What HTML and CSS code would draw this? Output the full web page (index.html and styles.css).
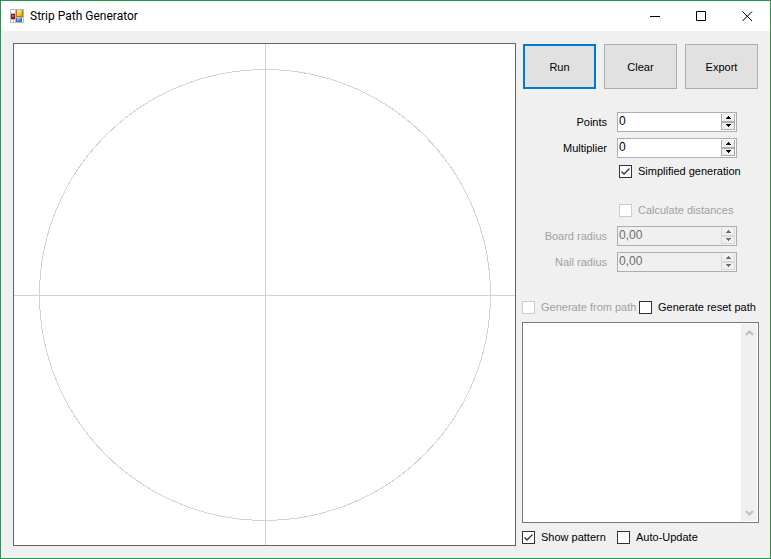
FILE: index.html
```html
<!DOCTYPE html>
<html lang="en">
<head>
<meta charset="utf-8">
<title>Strip Path Generator</title>
<link rel="stylesheet" href="styles.css">
</head>
<body>
<div class="window">
  <header class="titlebar">
    <svg class="app-icon" width="14" height="14" viewBox="0 0 14 14" shape-rendering="crispEdges" aria-hidden="true">
      <defs>
        <linearGradient id="gold" x1="0" y1="0" x2="1" y2="1"><stop offset="0" stop-color="#fff0a0"/><stop offset="1" stop-color="#f0a800"/></linearGradient>
        <linearGradient id="blue" x1="0" y1="0" x2="1" y2="1"><stop offset="0" stop-color="#a8ceff"/><stop offset="1" stop-color="#2f6fe0"/></linearGradient>
      </defs>
      <path fill="#bcbcbc" d="M0 0h14v14H0z"/>
      <path fill="#fff" d="M1 1h4v3H1zM1 11h2v2H1zM4 11h1v2H4zM12 9h1v4h-1z"/>
      <path fill="#b07a10" d="M6 1h7v7H6z"/><path fill="url(#gold)" d="M7 1h5v6H7z"/>
      <path fill="#8c1414" d="M1 5h4v5H1z"/><path fill="#e0604c" d="M2 6h2v2H2z"/>
      <path fill="#3c6cc0" d="M6 9h6v4H6z"/><path fill="url(#blue)" d="M7 9h4v3H7z"/>
    </svg>
    <h1 class="title">Strip Path Generator</h1>
    <div class="caption-buttons">
      <button class="caption" type="button" aria-label="Minimize"><svg width="11" height="11" viewBox="0 0 11 11"><path d="M0 5.500h10"/></svg></button>
      <button class="caption" type="button" aria-label="Maximize"><svg width="11" height="11" viewBox="0 0 11 11"><path d="M.5 .5h9v9h-9z"/></svg></button>
      <button class="caption" type="button" aria-label="Close"><svg width="11" height="11" viewBox="0 0 11 11"><path d="M.5 .5l9.500 9.500M10 .5L.5 10"/></svg></button>
    </div>
  </header>
  <main class="content">
    <div class="board">
      <svg class="pattern" viewBox="0 0 501 501" role="img" aria-label="Pattern">
        <path d="M251.500 0v501M0 251.500h501" shape-rendering="crispEdges"/>
        <circle cx="251" cy="251" r="225.500" shape-rendering="crispEdges"/>
      </svg>
    </div>
    <form class="panel">
      <div class="actions">
        <button class="action primary" type="button">Run</button>
        <button class="action" type="button">Clear</button>
        <button class="action" type="button">Export</button>
      </div>
      <div class="group">
        <div class="field">
          <label for="points">Points</label>
          <div class="spinner">
            <input id="points" type="text" value="0">
            <div class="steps">
              <button type="button" aria-label="Increase points"><svg width="7" height="4" viewBox="0 0 7 4"><path d="M3 0h1v1h1v1h1v1H1V2h1V1h1z"/></svg></button>
              <button type="button" aria-label="Decrease points"><svg width="7" height="4" viewBox="0 0 7 4"><path d="M1 0h5v1H5v1H4v1H3V2H2V1H1z"/></svg></button>
            </div>
          </div>
        </div>
        <div class="field">
          <label for="multiplier">Multiplier</label>
          <div class="spinner">
            <input id="multiplier" type="text" value="0">
            <div class="steps">
              <button type="button" aria-label="Increase multiplier"><svg width="7" height="4" viewBox="0 0 7 4"><path d="M3 0h1v1h1v1h1v1H1V2h1V1h1z"/></svg></button>
              <button type="button" aria-label="Decrease multiplier"><svg width="7" height="4" viewBox="0 0 7 4"><path d="M1 0h5v1H5v1H4v1H3V2H2V1H1z"/></svg></button>
            </div>
          </div>
        </div>
        <label class="check indented"><input type="checkbox" checked>Simplified generation</label>
      </div>
      <div class="group distances">
        <label class="check indented off"><input type="checkbox" disabled>Calculate distances</label>
        <div class="field off">
          <label for="board-radius">Board radius</label>
          <div class="spinner">
            <input id="board-radius" type="text" value="0,00" disabled>
            <div class="steps">
              <button type="button" aria-label="Increase board radius" disabled><svg width="7" height="4" viewBox="0 0 7 4"><path d="M3 0h1v1h1v1h1v1H1V2h1V1h1z"/></svg></button>
              <button type="button" aria-label="Decrease board radius" disabled><svg width="7" height="4" viewBox="0 0 7 4"><path d="M1 0h5v1H5v1H4v1H3V2H2V1H1z"/></svg></button>
            </div>
          </div>
        </div>
        <div class="field off">
          <label for="nail-radius">Nail radius</label>
          <div class="spinner">
            <input id="nail-radius" type="text" value="0,00" disabled>
            <div class="steps">
              <button type="button" aria-label="Increase nail radius" disabled><svg width="7" height="4" viewBox="0 0 7 4"><path d="M3 0h1v1h1v1h1v1H1V2h1V1h1z"/></svg></button>
              <button type="button" aria-label="Decrease nail radius" disabled><svg width="7" height="4" viewBox="0 0 7 4"><path d="M1 0h5v1H5v1H4v1H3V2H2V1H1z"/></svg></button>
            </div>
          </div>
        </div>
      </div>
      <div class="checks path-options">
        <label class="check off"><input type="checkbox" disabled>Generate from path</label>
        <label class="check"><input type="checkbox">Generate reset path</label>
      </div>
      <div class="output">
        <textarea aria-label="Path"></textarea>
        <div class="scrollbar">
          <button type="button" aria-label="Scroll up" disabled><svg width="9" height="6" viewBox="0 0 9 6"><path d="M1 5l3.500-3.500L8 5"/></svg></button>
          <button type="button" aria-label="Scroll down" disabled><svg width="9" height="6" viewBox="0 0 9 6"><path d="M1 1l3.500 3.500L8 1"/></svg></button>
        </div>
      </div>
      <div class="checks view-options">
        <label class="check"><input type="checkbox" checked>Show pattern</label>
        <label class="check"><input type="checkbox">Auto-Update</label>
      </div>
    </form>
  </main>
</div>
</body>
</html>
```
FILE: styles.css
```css
* { box-sizing: border-box; }

body {
  margin: 0;
  color: #000;
  font: 11px/14px "Liberation Sans", Arial, sans-serif;
}

button, input, textarea {
  margin: 0;
  padding: 0;
  border: 0;
  border-radius: 0;
  color: inherit;
  font: inherit;
}

svg { display: block; }

.window {
  display: flex;
  flex-direction: column;
  min-height: 100vh;
  border: 1px solid #219653;
  background: #f0f0f0;
}

.titlebar {
  display: flex;
  align-items: center;
  height: 30px;
  padding-left: 9px;
  background: #fff;
}

.title {
  flex: 1;
  margin: 0 0 0 6px;
  font: 12px/16px Roboto, sans-serif;
}

.caption-buttons { display: flex; }

.caption {
  display: grid;
  place-items: center;
  width: 46px;
  height: 30px;
  background: none;
}

.caption path { fill: none; stroke: #000; }

.content {
  display: flex;
  flex: 1;
  gap: 6px;
  padding: 12px 11px 12px 12px;
}

.board {
  flex: 1;
  min-width: 0;
  border: 1px solid #646464;
  background: #fff;
}

.pattern { width: 100%; height: 100%; }

.pattern path, .pattern circle { fill: none; stroke: #d3d3d3; }

.panel {
  display: flex;
  flex-direction: column;
  width: 237px;
}

.actions {
  display: grid;
  grid-template-columns: repeat(3, 1fr);
  gap: 8px;
  padding: 1px 1px 0;
}

.action {
  height: 45px;
  border: 1px solid #adadad;
  background: #e1e1e1;
}

.primary { border: 2px solid #0078d7; }

.group {
  display: flex;
  flex-direction: column;
  gap: 6px;
  margin-top: 23px;
  padding-right: 22px;
}

.distances { margin-top: 25px; }
.distances .check { margin-bottom: 3px; }

.field {
  display: flex;
  align-items: center;
  justify-content: flex-end;
  gap: 10px;
}

.spinner {
  display: flex;
  width: 120px;
  height: 20px;
  padding: 1px;
  border: 1px solid #abadb3;
  background: #fff;
}

.spinner input {
  flex: 1;
  min-width: 0;
  height: 14px;
  background: none;
  font-size: 12px;
}

.steps {
  display: grid;
  grid-template-rows: 8px 8px;
  width: 14px;
}

.steps button {
  display: grid;
  place-items: center;
  border: 1px solid #adadad;
  background: #f0f0f0;
}

.steps button:first-child { border-top: 0; }

.off { color: #a0a0a0; }
.off .spinner { background: #f0f0f0; }
.off .spinner input { color: #6d6d6d; }
.off .steps button { border-color: #d9d9d9; }
.off .steps path { fill: #6d6d6d; }

.check {
  display: flex;
  align-items: center;
  gap: 6px;
  height: 14px;
  line-height: 16px;
  white-space: nowrap;
}

.indented { margin-left: 97px; }

.check input {
  appearance: none;
  flex: none;
  width: 13px;
  height: 13px;
  border: 1px solid #333;
  background: #fff;
}

.check input:checked {
  background: #fff url("data:image/svg+xml,%3Csvg xmlns='http://www.w3.org/2000/svg' viewBox='0 0 11 11'%3E%3Cpath d='M1.500 5.500l2.500 2.500L9.500 2.500' fill='none' stroke='%23333' stroke-width='1.300'/%3E%3C/svg%3E");
}

.check input:disabled { border-color: #ccc; }

.checks { display: grid; }

.path-options {
  grid-template-columns: 117px 1fr;
  margin-top: 28px;
}

.view-options {
  grid-template-columns: 95px 1fr;
  margin: 7px 0 2px;
}

.output {
  display: flex;
  flex: 1;
  margin-top: 8px;
  padding: 1px;
  border: 1px solid #7a7a7a;
  background: #fff;
}

.output textarea {
  flex: 1;
  min-width: 0;
  resize: none;
  outline: 0;
}

.scrollbar {
  display: flex;
  flex-direction: column;
  justify-content: space-between;
  width: 16px;
  background: #f0f0f0;
}

.scrollbar button {
  display: grid;
  place-items: center;
  height: 17px;
  background: none;
}

.scrollbar path { fill: none; stroke: #bfbfbf; stroke-width: 2; }
```
